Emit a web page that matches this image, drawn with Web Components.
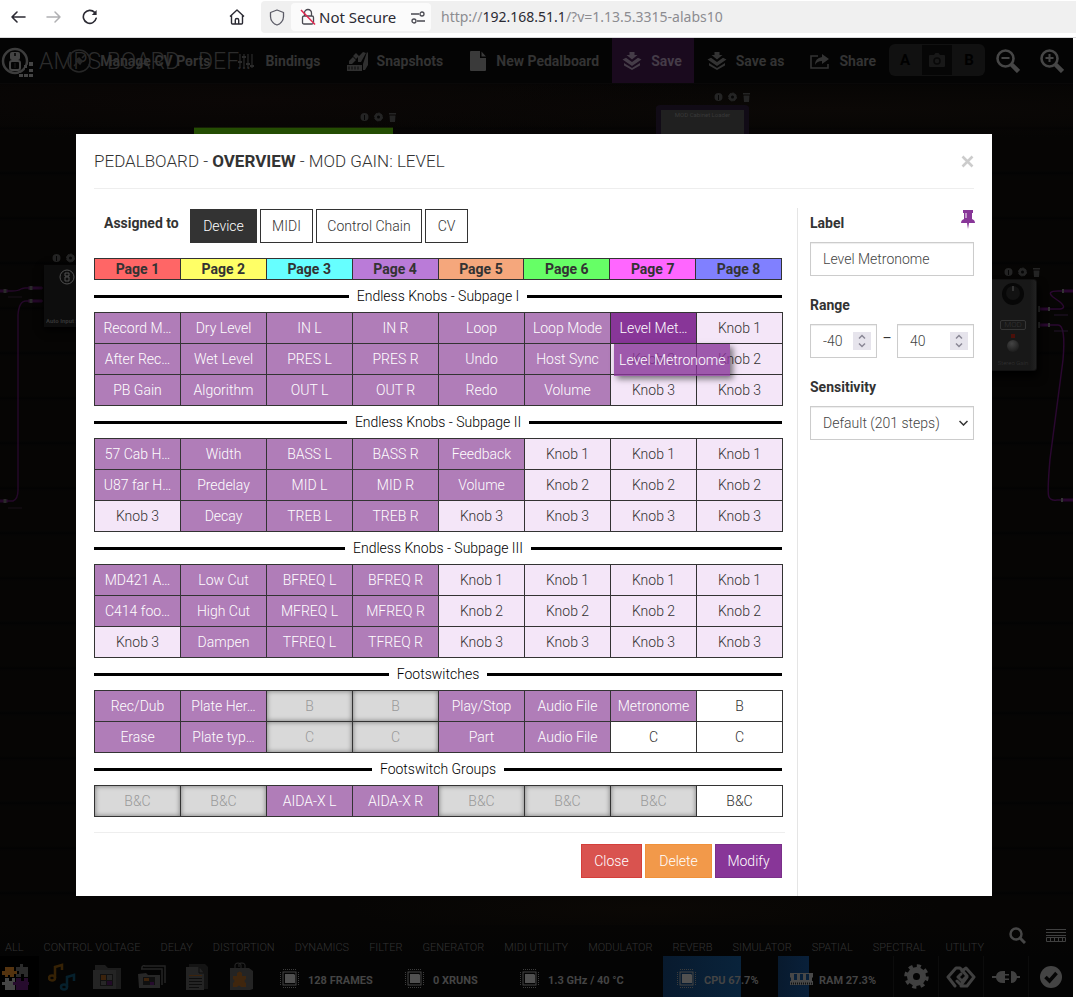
<!DOCTYPE html>
<html lang="en">
<head>
<meta charset="utf-8">
<title>MOD pedalboard</title>
<style>
  html, body { margin: 0; }
  body { min-height: 100vh; background: #fff; color: #333; font: 300 14px/22px Roboto, "Liberation Sans", sans-serif; }
</style>
</head>
<body>
<mod-window></mod-window>

<script>
const define = (name, html, after) => {
  const tpl = document.createElement('template');
  tpl.innerHTML = '<style>*{box-sizing:border-box}svg{display:block;flex:none}button{font:inherit;cursor:pointer}a{color:inherit;text-decoration:none}</style>' + html;
  customElements.define(name, class extends HTMLElement {
    constructor() {
      super();
      this.attachShadow({ mode: 'open' }).append(tpl.content.cloneNode(true));
    }
    connectedCallback() { if (after && !this.done) { this.done = true; after.call(this, this.shadowRoot); } }
  });
};

/* ---------- browser toolbar ---------- */
define('browser-bar', `
<style>
  :host { display: flex; align-items: center; height: 38px; border-bottom: 1px solid #d9d9db; background: #fff; box-sizing: border-box; padding: 0 0 4px; font: 400 15px/20px "Noto Sans", sans-serif; color: #2b2a33; }
  nav { display: flex; gap: 14px; padding-left: 7px; flex: 1; max-width: 261px; }
  button { border: 0; background: none; padding: 0; width: 22px; height: 22px; display: grid; place-items: center; color: #2b2a33; }
  button:disabled { color: #b0b0b3; }
  .home { margin-left: auto; margin-right: 13px; }
  .url { flex: 1; display: flex; align-items: center; height: 32px; background: #f0f0f0; border-radius: 4px 0 0 4px; margin-top: 1px; padding-left: 5px; }
  .chip { display: flex; align-items: center; height: 28px; background: #fbfbfb; border-radius: 4px; margin-left: 3px; padding: 0 4px 0 8px; width: 140px; }
  .chip span { margin: 0 14px 0 2px; white-space: nowrap; }
  .addr { margin-left: 10px; font-size: 14px; color: #8c8c90; white-space: nowrap; outline: 0; }
  .addr b { font-weight: 400; color: #2b2a33; }
</style>
<nav aria-label="Browser">
  <button aria-label="Back"><svg width="16" height="16" viewBox="0 0 16 16" fill="none" stroke="currentColor" stroke-width="1.6" stroke-linecap="round" stroke-linejoin="round"><path d="M15 8H2M7 3L2 8l5 5"/></svg></button>
  <button aria-label="Forward" disabled><svg width="16" height="16" viewBox="0 0 16 16" fill="none" stroke="currentColor" stroke-width="1.5" stroke-linecap="round" stroke-linejoin="round"><path d="M1 8h13M9 3l5 5-5 5"/></svg></button>
  <button aria-label="Reload"><svg width="16" height="16" viewBox="0 0 16 16" fill="none" stroke="currentColor" stroke-width="1.6" stroke-linecap="round"><path d="M14.2 9.2A6.5 6.5 0 1 1 12.6 3.4"/><path d="M14.6 1v5H9.8z" fill="currentColor" stroke="none"/></svg></button>
  <button class="home" aria-label="Home"><svg width="16" height="16" viewBox="0 0 16 16" fill="none" stroke="currentColor" stroke-width="1.4" stroke-linejoin="round"><path d="M1 7.5L8 1l7 6.5M2.5 6.5V14q0 1 1 1h9q1 0 1-1V6.500M6.300 15v-4q0-1.500 1.700-1.500t1.700 1.500v4"/></svg></button>
</nav>
<div class="url">
  <button aria-label="Tracking protection"><svg width="16" height="17" viewBox="0 0 16 17" fill="none" stroke="#5b5b66" stroke-width="1.300" stroke-linejoin="round"><path d="M8 1l6.500 2.500v4C14.500 12 11 15 8 16 5 15 1.500 12 1.500 7.500v-4z"/></svg></button>
  <div class="chip">
    <svg width="18" height="18" viewBox="0 0 18 18" fill="none" stroke="#4a4a52" stroke-width="1.300"><path d="M5.500 8V5a3.500 3.500 0 0 1 7 0v3M5 8h8q1.500 0 1.500 1.500v5q0 1.500-1.500 1.500H5q-1.500 0-1.500-1.500v-5Q3.500 8 5 8z"/><path d="M2 2l14 14.500" stroke="#e22850" stroke-width="1.500"/></svg>
    <span>Not Secure</span>
    <svg width="16" height="14" viewBox="0 0 16 14" fill="none" stroke="#4a4a52" stroke-width="1.300"><path d="M1 4h8M7 11h8"/><circle cx="12" cy="4" r="2"/><circle cx="4" cy="11" r="2"/></svg>
  </div>
  <div class="addr" role="textbox" aria-label="Address" contenteditable="true" spellcheck="false">http://<b>192.168.51.1</b>/?v=1.13.5.3315-alabs10</div>
</div>`);

/* ---------- top menu ---------- */
const saveIcon = '<svg width="20" height="20" viewBox="0 0 20 20" fill="currentColor"><path d="M7.500 1h5v3h3L10 8.500 4.500 4h3zM.5 8.500L4 6.700l6 4.200 6-4.200 3.500 1.800L10 15zM2 12l8 5 8-5v2.500L10 19l-8-4.500z"/></svg>';
define('top-menu', `
<style>
  :host { display: grid; height: 46px; background: #040404; color: #333; border-bottom: 1px solid #090808; box-sizing: border-box; }
  :host > * { grid-area: 1 / 1; align-self: stretch; }
  .brand { display: flex; align-items: center; gap: 6px; padding: 2px 0 0 1px; }
  h1 { margin: 0; font-weight: 300; font-size: 23px; line-height: 28px; color: #2c2c2c; white-space: nowrap; }
  nav { display: flex; justify-content: flex-end; font-weight: 700; font-size: 14px; }
  nav button.item { display: flex; align-items: center; gap: 9px; padding: 0 13px; border: 0; background: none; color: #333; white-space: nowrap; }
  nav button.item.active { background: #1a0a1e; color: #453c48; padding: 0 12px 0 10px; }
  .ab { display: flex; align-self: center; height: 32px; border-radius: 6px; background: #111; overflow: hidden; margin-bottom: 1px; }
  .ab button { border: 0; width: 32px; background: none; font-weight: 700; font-size: 15px; color: #000; display: grid; place-items: center; padding: 0; }
  .ab button:nth-child(2) { background: #060606; color: #181818; border: 1px solid #111; }
  .zoom { border: 0; background: none; width: 45px; padding: 0; display: grid; place-items: center; color: #464646; }
  .zoom:last-child { width: 43px; }
</style>
<div class="brand">
  <svg width="32" height="34" viewBox="0 0 32 34"><circle cx="14" cy="16" r="12" fill="none" stroke="#3d3d3d" stroke-width="2.500"/><rect x="9" y="7" width="10" height="8" rx="2" fill="#444"/><rect x="9" y="16" width="10" height="9" rx="2" fill="none" stroke="#444" stroke-width="2"/><path d="M14 8v3M14 18v5" stroke="#111" stroke-width="2"/><path d="M24 20h9v14H18v-6h6z" fill="#040404"/><path d="M23 20h3v3h-3zM28 17h4v4h-4zM28 24h4v3h-4zM18 29h4v3h-4zM23 29h4v3h-4zM28 29h4v3h-4z" fill="#444"/></svg>
  <h1>AMPS BOARD - DEF…</h1>
</div>
<nav>
  <button class="item"><svg width="24" height="24" viewBox="0 0 24 24" fill="none" stroke="#262626" stroke-width="1.600"><circle cx="12" cy="12" r="11"/><path d="M7 17l3-3m5-5l3-3M9 11l4 4 2-3-3-3z" fill="#262626"/></svg>Manage CV Ports</button>
  <button class="item"><svg width="20" height="20" viewBox="0 0 20 20" stroke="#2b2b2b" stroke-width="1.200"><path d="M4 3v14M8 3v14M12 3v14M16 3v14"/><path d="M2 11h4M6 6h4M10 13h4M14 15h4" stroke-width="2"/></svg>Bindings</button>
  <button class="item"><svg width="21" height="20" viewBox="0 0 21 20" fill="#303030"><path d="M0 14h15v6H0zM16 13l4-12 1 1v12l-3 5h-2zM2 10l4-4 3 3-4 4H2zM6 5l3-3 3 3-3 3zM11 6l5-5 3 1-5 9h-3z"/><path d="M2 15.500v3M5 15.500v3M8 15.500v3M11 15.500v3" stroke="#0a0a0a"/></svg>Snapshots</button>
  <button class="item"><svg width="18" height="22" viewBox="0 0 18 22" fill="#3a3a3a"><path d="M2 1h9v7h6v12q0 1-1 1H2q-1 0-1-1V2q0-1 1-1zM12.500 1.500L17 6.500h-4.500z"/></svg>New Pedalboard</button>
  <button class="item active">${saveIcon}Save</button>
  <button class="item">${saveIcon}Save as</button>
  <button class="item"><svg width="20" height="16" viewBox="0 0 20 16" fill="none" stroke="#333" stroke-width="1.600"><path d="M8 3H1v12h17v-4"/><path d="M12 1l7 5-7 5V8q-5 0-7 4Q5 5 12 4z" fill="#333" stroke="none"/></svg>Share</button>
  <div class="ab"><button>A</button><button aria-label="Snapshot"><svg width="16" height="14" viewBox="0 0 16 14" fill="currentColor"><path d="M5 2l1.500-2h3L11 2h4q1 0 1 1v10q0 1-1 1H1q-1 0-1-1V3q0-1 1-1z"/><circle cx="8" cy="8" r="3" fill="none" stroke="#080808" stroke-width="1.500"/></svg></button><button>B</button></div>
  <button class="zoom" aria-label="Zoom out"><svg width="25" height="25" viewBox="0 0 25 25" fill="none" stroke="currentColor" stroke-width="2.600"><circle cx="10.500" cy="10.500" r="8"/><path d="M16.500 16.500l7 7" stroke-width="4.500"/><path d="M6.500 10h8" stroke-width="2"/></svg></button>
  <button class="zoom" aria-label="Zoom in"><svg width="25" height="25" viewBox="0 0 25 25" fill="none" stroke="currentColor" stroke-width="2.600"><circle cx="10.500" cy="10.500" r="8"/><path d="M16.500 16.500l7 7" stroke-width="4.500"/><path d="M6.500 10h8M10.500 6v8" stroke-width="2"/></svg></button>
</nav>`);

/* ---------- canvas with pedals and cables ---------- */
const tools = '<svg width="37" height="10" viewBox="0 0 37 10" fill="#242424"><circle cx="4.500" cy="5" r="4"/><path d="M4 3h1v5H4z" fill="#060606"/><circle cx="18.500" cy="5" r="4" stroke="#242424" stroke-dasharray="2 1"/><circle cx="18.500" cy="5" r="1.500" fill="#060606"/><path d="M29 1h7v1.500h-7zM29.500 3.500h6L35 10h-5z"/></svg>';
define('pedal-canvas', `
<style>
  :host { display: block; position: relative; overflow: hidden; font-size: 7px; line-height: 8px;
    background: radial-gradient(ellipse 480px 40px at 24% 2%, #0b0706, transparent), radial-gradient(ellipse 560px 30px at 78% 3%, #0b0806, transparent), radial-gradient(ellipse 300px 30px at 60% 98%, #0b0805, transparent),
      repeating-linear-gradient(180deg, #050404 0 1px, #060504 2px 42px, #030303 44px 45px); }
  .node { position: absolute; }
  .green { left: 194px; top: 43px; width: 199px; height: 60px; background: #244d03; border-top: 1px solid #151f05; }
  .cab { left: 656px; top: 21px; width: 93px; height: 60px; border: 5px solid #110b16; border-bottom: 0; border-radius: 4px; background: #202020; color: #393939; text-align: center; padding-top: 1px; }
  .cab b { display: block; font-weight: 400; font-size: 6px; white-space: nowrap; }
  .auto { left: 44px; top: 181px; width: 60px; height: 62px; background: #0d0d0d; color: #353535; box-shadow: 0 3px 8px #000; padding: 4px 2px 0; }
  .auto span { display: block; white-space: nowrap; overflow: hidden; margin-top: 32px; font-weight: 700; font-size: 6px; }
  .auto svg { margin: 0 auto 0 13px; }
  .gain { right: 36px; top: 195px; width: 70px; height: 92px; background: linear-gradient(90deg,#181818 0 62px,#212121); border: 1px solid #111; border-radius: 3px; box-shadow: 2px 6px 8px #000; color: #343434; display: flex; flex-direction: column; align-items: center; padding: 2px 0 0 22px; }
  .gain em { border: 1px solid #353535; border-radius: 2px; font-style: normal; font-size: 8px; padding: 0 3px; margin-top: 14px; }
  .gain span { font-size: 6px; margin-top: 7px; white-space: nowrap; }
  .led { width: 4px; height: 4px; background: #4b100a; margin: 4px 0 2px; }
  .knob { width: 12px; height: 12px; border-radius: 6px; background: radial-gradient(circle at 40% 30%, #444, #111); }
</style>
<svg class="node" style="left:0;top:170px" width="50" height="260" viewBox="0 0 50 260" fill="none" stroke="#240829" stroke-width="1.500"><path d="M0 37h12q6 0 9-2t22-1M43 47H26q-7 0-8 14V236q0 9-5 11H0"/><path d="M28 34h14M28 47h14M0 37h8M0 247h8" stroke-width="3"/><path d="M31 32v4M31 45v4M5 35v4M5 245v4" stroke="#292929" stroke-width="3"/><path d="M8 43h14M8 254h14" stroke="#181018" stroke-width="1"/></svg>
<svg class="node" style="right:0;top:195px" width="35" height="230" viewBox="0 0 35 230" fill="none" stroke="#2a0830" stroke-width="1.500"><path d="M35 12H20q-12 0-5 6l7 5q8 7-2 7H2M2 46h18q8 0 5 35L12 180q-3 35-1 38 2 4 8 3h16"/><path d="M2 30h10M2 46h10M24 12h11M24 221h11" stroke-width="3"/><path d="M1 27v6M11 28v4M1 43v6M11 44v4M25 10v4M24 219v4" stroke="#333" stroke-width="2"/><path d="M16 36h14M16 52h14" stroke="#22152a" stroke-width="1"/></svg>
<div class="node green"></div>
<div class="node" style="left:360px;top:28px">${tools}</div>
<div class="node" style="left:714px;top:8px">${tools}</div>
<div class="node" style="left:52px;top:169px">${tools}</div>
<div class="node" style="right:32px;top:183px">${tools}</div>
<div class="node cab"><b>MOD Cabinet Loader</b></div>
<div class="node auto"><svg width="16" height="16" viewBox="0 0 16 16" fill="none" stroke="#505050"><circle cx="8" cy="8" r="7"/><path d="M6 4h4v3H6zM6 8h4v4H6z"/></svg><span>Auto Input Selector</span></div>
<div class="node gain"><svg width="24" height="24" viewBox="0 0 24 24"><circle cx="12" cy="12" r="11" fill="#070707"/><circle cx="12" cy="11" r="7" fill="#121212"/><path d="M12 4v5" stroke="#555"/></svg><em>MOD</em><div class="led"></div><div class="knob"></div><span>Stereo Gain</span></div>`);

/* ---------- plugin categories and status bar ---------- */
const chip = '<svg width="19" height="19" viewBox="0 0 19 19"><rect x="3" y="3" width="13" height="13" fill="none" stroke="#454545"/><path d="M5 5h9l1 1v8H5z" fill="#505050"/><path d="M3 .5h14M3 18.500h14M.5 3v14M18.500 3v14" stroke="#3c3c3c" stroke-dasharray="1 1"/></svg>';
define('status-bar', `
<style>
  :host { display: block; background: #040404; color: #333; font-size: 11px; line-height: 16px; }
  .cats { display: flex; align-items: flex-end; height: 32px; background: linear-gradient(#060504, #040404); padding: 0 7px 0 5px; margin-bottom: -1px; }
  .cats a { margin: 0 20px 1px 0; white-space: nowrap; }
  .cats .r { margin: 0 0 13px auto; display: flex; gap: 20px; align-items: center; }
  .bar { display: flex; height: 41px; align-items: stretch; }
  .bar button { border: 0; background: none; padding: 0; display: grid; place-items: center; width: 45px; border-left: 1px solid #0c0c0c; }
  .tabs { display: flex; width: 281px; }
  .tabs button { border: 0; }
  .tabs button:first-child { background: #000; width: 39px; padding-right: 9px; }
  .st { display: flex; align-items: center; gap: 9px; font-weight: 700; color: #444; white-space: nowrap; padding-top: 8px; flex: none; }
  .st svg { margin-bottom: 4px; }
  .set { display: flex; margin-left: auto; }
</style>
<div class="cats"></div>
<div class="bar">
  <div class="tabs">
    <button aria-label="Plugins"><svg width="28" height="28" viewBox="0 0 28 28"><path d="M1 12V8h3V4h9v4h3v3h-3v3H9v-2H7v2H4v-2z" fill="#54330f"/><path d="M15 4h4V1h3v3h5v10h-4v-3h-3v3h-5v-3h3V8h-3z" fill="#2b2b2b"/><path d="M4 15h4v3h3v-3h3v4h3v3h-3v5H4v-5H1v-3h3z" fill="#454545"/><path d="M15 15h5v3h3v-3h4v4h1v3h-1v5H15v-5h-3v-3h3z" fill="#260b2d"/></svg></button>
    <button aria-label="Banks"><svg width="28" height="28" viewBox="0 0 28 28" fill="none" stroke-width="2.500"><path d="M7 15V4l7-2v5" stroke="#362205"/><ellipse cx="4" cy="15" rx="3" ry="2.500" stroke="#362205"/><path d="M19 24V14l7-2v6" stroke="#06202c"/><ellipse cx="16" cy="24" rx="3" ry="2.500" stroke="#06202c"/></svg></button>
    <button aria-label="Pedalboards"><svg width="28" height="24" viewBox="0 0 28 24"><path d="M2 0h10l3 3h13v21H2z" fill="#1c1c1c"/><path d="M0 5h23v19H0z" fill="#242424"/><path d="M7 9h13v12H7z" fill="#111"/><path d="M8 10h5v5H8z" fill="#3c230c"/><path d="M14 10h5v5h-5zM8 16h5v4H8z" fill="#272727"/><path d="M14 16h5v4h-5z" fill="#210b27"/></svg></button>
    <button aria-label="Banks list"><svg width="28" height="24" viewBox="0 0 28 24"><path d="M6 1h21v17M3 4h21v16M4 4V2l3-3" fill="none" stroke="#242424" stroke-width="1.500"/><path d="M0 9l8-1 2 2h12v13H1z" fill="#272727"/><path d="M5 12h12v8H5z" fill="#101010"/><path d="M6 13h5v3H6z" fill="#3c230c"/><path d="M12 17h4v3h-4z" fill="#250b2d"/></svg></button>
    <button aria-label="Files"><svg width="24" height="28" viewBox="0 0 24 28"><path d="M4 1h16l3 3v22H4z" fill="#141414"/><path d="M1 4h13l5 6v17H1z" fill="#242424"/><path d="M14 4v6h5" fill="none" stroke="#0d0d0d"/><path d="M4 15.500h13M4 18.500h13M4 21.500h13M4 24.500h10" stroke="#0d0d0d"/><path d="M4 12.500h13" stroke="#3c230c"/></svg></button>
    <button aria-label="Store"><svg width="25" height="29" viewBox="0 0 25 29"><path d="M6 6V3q0-2 3-2t3 2v3M10 5V2q0-1 3-1t3 2v3" fill="none" stroke="#292929"/><path d="M1 6h19l4 3v18l-3 1H1z" fill="#242424"/><path d="M4 14h4v-3q3-3 5 0v3h4v3q-3 2 0 4v4h-5q-2-3-4 0H4v-4q3-2 0-4z" fill="#3f260e"/></svg></button>
  </div>
  <div class="st" style="width:125px">${chip}<span>128 FRAMES</span></div>
  <div class="st" style="width:115px">${chip}<span>0 XRUNS</span></div>
  <div class="st" style="width:143px">${chip}<span>1.3 GHz / 40 °C</span></div>
  <div class="st" style="width:115px;padding-left:14px;gap:8px;background:linear-gradient(90deg,#081a2e,#09233b) no-repeat 0 0/78px 100%">${chip}<span>CPU 67.7%</span></div>
  <div class="st" style="width:115px;padding-left:12px;gap:6px;background:linear-gradient(90deg,#081a2e,#09203a) no-repeat 0 0/31px 100%"><svg width="23" height="14" viewBox="0 0 23 14"><path d="M0 1h23v4l-1 1v3h1v4H0V9h1V6L0 5z" fill="#484848"/><path d="M4 2h3v6H4zM10 2h3v6h-3zM16 2h3v6h-3z" fill="#08203a"/><path d="M1 11.500h21" stroke="#111" stroke-dasharray="1 1" stroke-width="2"/></svg><span>RAM 27.3%</span></div>
  <div class="set">
    <button aria-label="Settings"><svg width="25" height="25" viewBox="0 0 25 25"><circle cx="12.500" cy="12.500" r="6.500" fill="none" stroke="#404040" stroke-width="6"/><circle cx="12.500" cy="12.500" r="10.500" fill="none" stroke="#404040" stroke-width="3.500" stroke-dasharray="4.100 4.147"/></svg></button>
    <button aria-label="Control chain"><svg width="30" height="22" viewBox="0 0 30 22" fill="none" stroke="#404040" stroke-width="3" stroke-linejoin="round" stroke-linecap="round"><path d="M9 20l-7-9 8-9h4l7 8-5 5-4-4 3-3M15 20h6l7-9-8-9-4 3M21 11l-6 8-4-4"/></svg></button>
    <button aria-label="Connection"><svg width="28" height="12" viewBox="0 0 28 12" fill="#404040"><path d="M0 5h4q1-5 7-5h2v3h4v1.500h-4v3h4V9h-4v3h-2q-6 0-7-5H0zM19 0q5 0 6 5h3v2h-3q-1 5-6 5z"/></svg></button>
    <button aria-label="Status"><svg width="22" height="22" viewBox="0 0 22 22"><circle cx="11" cy="11" r="11" fill="#444"/><path d="M5.500 11l4 4 7-8" fill="none" stroke="#050505" stroke-width="3.500"/></svg></button>
  </div>
</div>`, function (r) {
  const names = ['ALL','CONTROL VOLTAGE','DELAY','DISTORTION','DYNAMICS','FILTER','GENERATOR','MIDI UTILITY','MODULATOR','REVERB','SIMULATOR','SPATIAL','SPECTRAL','UTILITY'];
  r.querySelector('.cats').innerHTML = names.map(n => `<a href="#">${n}</a>`).join('') +
    '<div class="r"><svg width="17" height="17" viewBox="0 0 17 17" fill="none" stroke="#464646" stroke-width="2.500"><circle cx="7" cy="7" r="5.500"/><path d="M11 11l5 5" stroke-width="3"/></svg><svg width="20" height="13" viewBox="0 0 20 13" stroke="#404040" fill="none"><path d="M0 .5h20M0 3.500h20M0 6.500h20"/><path d="M.5 8.500h19v4H.5zM4.500 9v4M8.500 9v4M12.500 9v4M16.500 9v4"/></svg></div>';
});

/* ---------- assignment grid ---------- */
define('section-title', `
<style>
  :host { display: flex; align-items: center; gap: 8px; height: 32px; color: #000; padding-right: 1px; }
  :host::before, :host::after { content: ""; flex: 1; height: 3px; background: #000; }
  h3 { margin: 0; font: inherit; white-space: nowrap; }
</style><h3><slot></slot></h3>`);

const cellStyle = `
<style>
  :host { display: block; }
  table { width: 100%; border-collapse: collapse; table-layout: fixed; }
  td { position: relative; height: 31px; padding: 0 4px; border: 1px solid #333; text-align: center; color: #fff; background: #b07db8; line-height: 22px; }
  td > span { display: block; overflow: hidden; text-overflow: ellipsis; white-space: nowrap; }
  td.free { background: #f4e6f8; color: #333; }
  td.open { background: #fff; color: #333; }
  td.off { background: #d9d9d9; color: #999; box-shadow: inset 0 0 5px #777; }
  td.on { background: #883698; }
  .drag { position: absolute; z-index: 2; left: 3px; top: 31px; height: 32px; padding: 0 5px; line-height: 32px; white-space: nowrap; background: rgba(136, 54, 152, .8); box-shadow: 3px 3px 6px rgba(0, 0, 0, .5); }
</style><table><tbody></tbody></table>`;
const rows = {
  k1: ['Record Mode|Dry Level|IN L|IN R|Loop|Loop Mode|!Level Metronome|-Knob 1','After Record|Wet Level|PRES L|PRES R|Undo|Host Sync|-Knob 2|-Knob 2','PB Gain|Algorithm|OUT L|OUT R|Redo|Volume|-Knob 3|-Knob 3'],
  k2: ['57 Cab Here|Width|BASS L|BASS R|Feedback|-Knob 1|-Knob 1|-Knob 1','U87 far Here|Predelay|MID L|MID R|Volume|-Knob 2|-Knob 2|-Knob 2','-Knob 3|Decay|TREB L|TREB R|-Knob 3|-Knob 3|-Knob 3|-Knob 3'],
  k3: ['MD421 Amp|Low Cut|BFREQ L|BFREQ R|-Knob 1|-Knob 1|-Knob 1|-Knob 1','C414 foot on|High Cut|MFREQ L|MFREQ R|-Knob 2|-Knob 2|-Knob 2|-Knob 2','-Knob 3|Dampen|TFREQ L|TFREQ R|-Knob 3|-Knob 3|-Knob 3|-Knob 3'],
  f: ['Rec/Dub|Plate Here on|~B|~B|Play/Stop|Audio File|Metronome|=B','Erase|Plate type on|~C|~C|Part|Audio File|=C|=C'],
  g: ['~B&C|~B&C|AIDA-X L|AIDA-X R|~B&C|~B&C|~B&C|=B&C']
};
const kinds = { '-': 'free', '~': 'off', '=': 'open', '!': 'on' };
const short = { 'Record Mode': 'Record M…', 'After Record': 'After Rec…', 'Level Metronome': 'Level Met…', '57 Cab Here': '57 Cab H…', 'U87 far Here': 'U87 far H…', 'MD421 Amp': 'MD421 A…', 'C414 foot on': 'C414 foo…', 'Plate Here on': 'Plate Her…', 'Plate type on': 'Plate typ…' };
define('knob-grid', cellStyle, function (r) {
  r.querySelector('tbody').innerHTML = rows[this.getAttribute('rows')].map(line => '<tr>' + line.split('|').map(c => {
    const kind = kinds[c[0]] || '';
    const text = (kind ? c.slice(1) : c);
    const label = (short[text] || text).replace('&', '&amp;');
    return `<td class="${kind}"><span>${label}</span>${kind === 'on' ? `<div class="drag">${text}</div>` : ''}</td>`;
  }).join('') + '</tr>').join('');
});

define('page-tabs', `
<style>
  :host { display: block; padding-right: 1px; }
  table { width: 100%; border-collapse: collapse; table-layout: fixed; }
  th { height: 21px; padding: 0; border: 1px solid #333; font-weight: 700; line-height: 20px; }
</style><table><thead><tr></tr></thead></table>`, function (r) {
  r.querySelector('tr').innerHTML = ['#ff6666','#ffff66','#66ffff','#ba7bd8','#f5a77c','#66ff66','#ff66ff','#8080ff'].map((c, i) => `<th scope="col" style="background:${c}">Page ${i + 1}</th>`).join('');
});

/* ---------- parameter form ---------- */
const spin = '<svg width="18" height="18" viewBox="0 0 18 18"><rect width="18" height="18" fill="#e6e4ec"/><path d="M6 6.500l3-3 3 3M6 11.500l3 3 3-3" fill="none" stroke="#8a8896" stroke-width="1.500"/></svg>';
define('param-form', `
<style>
  :host { display: block; padding: 4px 0 0 12px; border-left: 1px solid #e5e5e5; }
  label { font-weight: 700; line-height: 22px; color: #333; }
  .head { display: flex; justify-content: space-between; }
  .head svg { margin-right: -1px; margin-top: -2px; }
  .head, .rl { height: 22px; margin-bottom: 8px; }
  .rl { display: block; margin-top: 18px; }
  .box { display: flex; align-items: center; height: 34px; border: 1px solid #ccc; box-shadow: inset 0 1px 1px rgba(0,0,0,.075); padding: 0 5px 0 12px; }
  input, select { flex: 1; min-width: 0; width: 100%; height: 100%; padding: 0; border: 0; outline: 0; background: none; font: inherit; color: #444; appearance: none; -moz-appearance: textfield; }
  input::-webkit-inner-spin-button { appearance: none; margin: 0; }
  .range { display: grid; grid-template-columns: 67fr 20px 77fr; }
  .range > span { text-align: center; line-height: 28px; font-weight: 400; }
</style>
<div class="head"><label for="name">Label</label><svg width="14" height="20" viewBox="0 0 14 20" fill="#883698"><path d="M2 0h10v3h-1v6q3 1 3 4H8l-1 6-1-6H0q0-3 3-4V3H2z"/><path d="M5 3v5" stroke="#d7b9dd" stroke-width="1.500"/></svg></div>
<div class="box"><input id="name" type="text" value="Level Metronome"></div>
<label class="rl" for="min">Range</label>
<div class="range"><div class="box"><input id="min" type="number" value="-40">${spin}</div><span>–</span><div class="box"><input type="number" value="40" aria-label="Range maximum">${spin}</div></div>
<label class="rl" for="steps">Sensitivity</label>
<div class="box"><select id="steps"><option>Default (201 steps)</option></select><svg width="9" height="6" viewBox="0 0 9 6" fill="none" stroke="#333" stroke-width="1.500"><path d="M.5 1l4 4 4-4"/></svg></div>`);

/* ---------- dialog ---------- */
define('address-dialog', `
<style>
  :host { display: block; background: #fff; color: #333; padding: 0 18px; }
  header { display: flex; align-items: center; height: 55px; border-bottom: 1px solid #eee; }
  h2 { margin: 0; flex: 1; font-weight: 300; font-size: 17px; line-height: 24px; white-space: nowrap; }
  h2 b { font-weight: 700; }
  header button { border: 0; background: none; padding: 0; }
  .body { display: grid; grid-template-columns: minmax(0, 1fr) 177px; column-gap: 14px; padding-top: 19px; }
  .assign { display: grid; grid-template-columns: 83px 67px 53px 106px 43px; gap: 3px; height: 34px; margin: 1px 0 15px 10px; }
  .assign span { font-weight: 700; line-height: 28px; white-space: nowrap; }
  button.b { height: 34px; padding: 0; border: 1px solid #333; background: #fff; color: #333; font-weight: 300; white-space: nowrap; }
  button.b.sel { background: #333; color: #fff; }
  footer { display: grid; grid-template-columns: 61px 67px 67px; justify-content: end; gap: 3px; margin: 15px -2px 18px 0; padding: 11px 3px 0 0; border-top: 1px solid #eee; }
  footer button.b { color: #fff; }
  footer button.c { background: #d9534f; border-color: #d43f3a; }
  footer button.d { background: #f2994a; border-color: #f0913a; }
  footer button.m { background: #883698; border-color: #7a3089; }
</style>
<header><h2>PEDALBOARD - <b>OVERVIEW</b> - MOD GAIN: LEVEL</h2><button aria-label="Close dialog"><svg width="13" height="13" viewBox="0 0 13 13" stroke="#ccc" stroke-width="2.600"><path d="M1.500 1.500l10 10M11.500 1.500l-10 10"/></svg></button></header>
<div class="body">
  <main>
    <div class="assign"><span>Assigned to</span><button class="b sel">Device</button><button class="b">MIDI</button><button class="b">Control Chain</button><button class="b">CV</button></div>
    <page-tabs></page-tabs>
    <section-title>Endless Knobs - Subpage I</section-title><knob-grid rows="k1"></knob-grid>
    <section-title>Endless Knobs - Subpage II</section-title><knob-grid rows="k2"></knob-grid>
    <section-title>Endless Knobs - Subpage III</section-title><knob-grid rows="k3"></knob-grid>
    <section-title>Footswitches</section-title><knob-grid rows="f"></knob-grid>
    <section-title>Footswitch Groups</section-title><knob-grid rows="g"></knob-grid>
    <footer><button class="b c">Close</button><button class="b d">Delete</button><button class="b m">Modify</button></footer>
  </main>
  <param-form></param-form>
</div>`);

/* ---------- window ---------- */
define('mod-window', `
<style>
  :host { display: flex; flex-direction: column; min-height: 100vh; }
  .app { flex: 1; display: grid; margin-right: 3px; background: #040404; }
  .app > * { grid-area: 1 / 1; min-width: 0; }
  .under { display: flex; flex-direction: column; }
  pedal-canvas { flex: 1; }
  .over { padding: 96px 81px 101px 76px; z-index: 1; pointer-events: none; }
  address-dialog { pointer-events: auto; }
</style>
<browser-bar></browser-bar>
<div class="app">
  <div class="under"><top-menu></top-menu><pedal-canvas></pedal-canvas><status-bar></status-bar></div>
  <div class="over"><address-dialog></address-dialog></div>
</div>`);
</script>
</body>
</html>
